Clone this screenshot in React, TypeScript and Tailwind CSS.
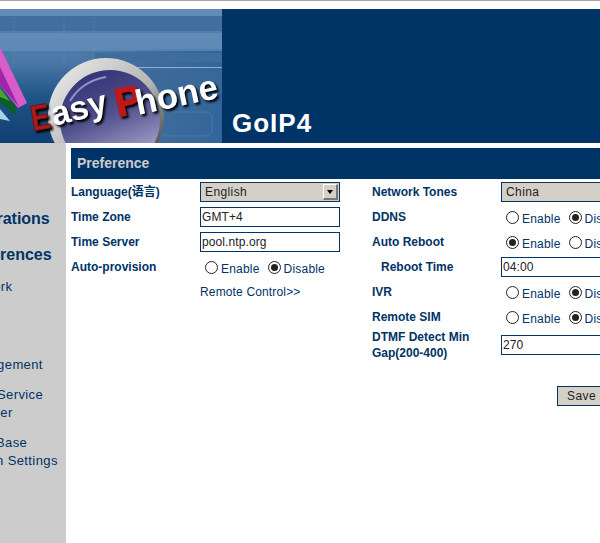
import React from 'react';

const font = { fontFamily: '"Liberation Sans", "Noto Sans CJK SC", sans-serif' };

const Logo = () => (
  <svg width="222" height="134" viewBox="0 0 222 134" className="block shrink-0">
    <defs>
      <linearGradient id="sky" x1="0" y1="0" x2="0" y2="1">
        <stop offset="0" stopColor="#5a84b1" />
        <stop offset="0.4" stopColor="#4a77a6" />
        <stop offset="0.65" stopColor="#1f5488" />
        <stop offset="1" stopColor="#0f3f72" />
      </linearGradient>
      <linearGradient id="skyRight" x1="0" y1="0" x2="1" y2="0">
        <stop offset="0" stopColor="#4a78a8" stopOpacity="0" />
        <stop offset="0.5" stopColor="#3f6d9d" stopOpacity="1" />
        <stop offset="1" stopColor="#33659a" stopOpacity="1" />
      </linearGradient>
      <linearGradient id="disc" x1="0" y1="0" x2="0.4" y2="1">
        <stop offset="0" stopColor="#2c2c72" />
        <stop offset="0.55" stopColor="#50508c" />
        <stop offset="1" stopColor="#a0a0c8" />
      </linearGradient>
      <linearGradient id="ring" x1="0" y1="0" x2="1" y2="1">
        <stop offset="0" stopColor="#f0f0f0" />
        <stop offset="0.55" stopColor="#b5b5b5" />
        <stop offset="1" stopColor="#222" />
      </linearGradient>
    </defs>
    <rect width="222" height="134" fill="url(#sky)" />
    <rect x="70" y="40" width="152" height="94" fill="url(#skyRight)" />
    <rect x="0" y="0" width="222" height="7" fill="#6a92bc" opacity="0.55" />
    <rect x="0" y="7" width="222" height="15" fill="#3d6998" opacity="0.8" />
    <rect x="0" y="24" width="222" height="18" fill="#6d95c0" opacity="0.55" />
    <rect x="95" y="44" width="127" height="9" fill="#3e6c9c" />
    <rect x="130" y="58" width="92" height="1" fill="#8aaed0" />
    <rect x="120" y="62" width="102" height="22" fill="#3a6898" opacity="0.7" />
    <rect x="160" y="103" width="52" height="24" rx="6" fill="none" stroke="#4a78a8" />
    <path d="M14 0 V60 M64 0 V60 M94 0 V45" stroke="#6f96bf" strokeDasharray="1 2" strokeWidth="1" opacity="0.7" />
    <path d="M0 38 L27 94 L18 99 L0 76 Z" fill="#d95ccb" />
    <path d="M0 58 L19 98 L0 76 Z" fill="#a024a8" />
    <path d="M0 79 L16 98 L16 106 L0 94 Z" fill="#0c5d2a" />
    <path d="M0 79 L10 92 L0 88 Z" fill="#4ea02f" />
    <path d="M0 100 L10 112 L0 110 Z" fill="#a6d3e6" />
    <circle cx="106" cy="107" r="58" fill="url(#ring)" />
    <circle cx="110" cy="111" r="50" fill="url(#disc)" />
    <path d="M70 92 Q82 72 106 68" fill="none" stroke="#a8a8d8" strokeWidth="2" opacity="0.8" />
    <g fontFamily='"Liberation Sans", sans-serif' fontWeight="700" className="drop-shadow-[2px_2px_1px_#000]">
      <text transform="translate(33 122) rotate(-10) scale(0.8 1)" fontSize="36" fill="#a81c1c" stroke="#7a1010" strokeWidth="1">E</text>
      <text transform="translate(54 117) rotate(-14)" fontSize="34" fill="#fff">asy</text>
      <text transform="translate(118 108) rotate(-12)" fontSize="40" fill="#c01818" stroke="#c01818" strokeWidth="1.2">P</text>
      <text transform="translate(138 106) rotate(-12)" fontSize="35" fill="#fff">hone</text>
    </g>
  </svg>
);

const Label = ({ children, className = '' }: { children: React.ReactNode; className?: string }) => (
  <div className={`font-bold text-[12px] leading-4 text-[#003366] ${className}`}>{children}</div>
);

const Radio = ({ on }: { on?: boolean }) => (
  <span className="w-[13px] h-[13px] rounded-full border border-[#222] bg-white flex items-center justify-center shrink-0">
    {on && <span className="w-[7px] h-[7px] rounded-full bg-[#222]" />}
  </span>
);

const RadioPair = ({ value }: { value: 'on' | 'off' }) => (
  <div className="flex items-center ml-[5px] text-[12px] tracking-[0.2px] text-[#003366]">
    <Radio on={value === 'on'} />
    <span className="ml-[3px] mt-[2px] mr-[8px]">Enable</span>
    <Radio on={value === 'off'} />
    <span className="ml-[3px] mt-[2px]">Disable</span>
  </div>
);

const Field = ({ value }: { value: string }) => (
  <div className="w-[140px] h-5 mb-px border border-[#003366] bg-white pl-[1px] text-[12px] leading-[18px] tracking-[0.1px] text-[#222]">{value}</div>
);

const Select = ({ value }: { value: string }) => (
  <div className="w-[140px] h-5 mb-px border border-[#003366] bg-[#d4d0c8] pl-1 flex items-center justify-between text-[12px] tracking-[0.4px] text-[#222]">
    <span>{value}</span>
    <span className="w-[15px] h-4 mr-[1px] bg-[#d4d0c8] border-t border-l border-white border-r-2 border-b-2 border-r-[#777] border-b-[#777] flex items-center justify-center">
      <span className="w-0 h-0 border-x-[3px] border-x-transparent border-t-[4px] border-t-black" />
    </span>
  </div>
);

const Row = ({ label, children, labelClass = '', rowClass = 'h-[25px]' }: { label: React.ReactNode; children: React.ReactNode; labelClass?: string; rowClass?: string }) => (
  <div className={`flex items-center ${rowClass}`}>
    <Label className={`w-[129px] shrink-0 ${labelClass}`}>{label}</Label>
    {children}
  </div>
);

export default function App() {
  return (
    <div className="w-[600px] h-[543px] overflow-hidden bg-white flex flex-col" style={font}>
      <div className="h-px bg-[#a8a4a0] shrink-0" />
      <div className="h-[134px] mt-2 bg-[#003366] flex shrink-0">
        <Logo />
        <div className="ml-[10px] mt-[99px] text-[26px] leading-[30px] font-bold tracking-[1px] text-white">GoIP4</div>
      </div>
      <div className="flex flex-1 min-h-0">
        <aside className="w-[66px] shrink-0 bg-[#cccccc] overflow-hidden text-[#003366] text-[13px] whitespace-nowrap">
          <div className="font-bold text-[16px] leading-5 mt-[66px] -ml-[64px]">Configurations</div>
          <div className="font-bold text-[16px] leading-5 mt-4 -ml-[40px]">Preferences</div>
          <div className="leading-4 mt-[14px] -ml-[38px] tracking-[0.4px]">Network</div>
          <div className="leading-4 mt-[62px] -ml-[37px] tracking-[0.4px]">Management</div>
          <div className="leading-[18px] mt-[13px] -ml-[3px] tracking-[0.4px]">Service</div>
          <div className="leading-[18px] -ml-[39px] tracking-[0.4px]">Provider</div>
          <div className="leading-[18px] mt-3 -ml-[4px] tracking-[0.4px]">Base</div>
          <div className="leading-[18px] -ml-[4px] tracking-[0.4px]">n Settings</div>
        </aside>
        <main className="flex-1 min-w-0 pl-[5px] pt-[5px] overflow-hidden">
          <div className="h-[31px] bg-[#003366] flex items-center pl-[6px] text-[14px] font-bold text-[#cccccc]">Preference</div>
          <div className="flex mt-px w-[700px]">
            <section className="w-[301px] shrink-0">
              <Row label={<>Language(语言)</>} labelClass="-mt-0.5"><Select value="English" /></Row>
              <Row label="Time Zone" labelClass="-mt-0.5"><Field value="GMT+4" /></Row>
              <Row label="Time Server" labelClass="-mt-0.5"><Field value="pool.ntp.org" /></Row>
              <Row label="Auto-provision" labelClass="-mt-0.5"><RadioPair value="off" /></Row>
              <Row label=""><span className="-mt-0.5 text-[12px] tracking-[0.15px] text-[#003366]">Remote Control&gt;&gt;</span></Row>
            </section>
            <section className="flex-1">
              <Row label="Network Tones" labelClass="-mt-0.5"><Select value="China" /></Row>
              <Row label="DDNS" labelClass="-mt-0.5"><RadioPair value="off" /></Row>
              <Row label="Auto Reboot" labelClass="-mt-0.5"><RadioPair value="on" /></Row>
              <Row label="Reboot Time" labelClass="-mt-0.5 pl-[9px]"><Field value="04:00" /></Row>
              <Row label="IVR" labelClass="-mt-0.5"><RadioPair value="off" /></Row>
              <Row label="Remote SIM" labelClass="-mt-0.5"><RadioPair value="off" /></Row>
              <Row label={<>DTMF Detect Min<br />Gap(200-400)</>} labelClass="-mt-0.5" rowClass="h-[31px]"><Field value="270" /></Row>
              <div className="mt-[25px] ml-[185px] w-[100px] h-5 border border-[#003366] bg-[#d4d0c8] pl-[9px] text-[12px] leading-[18px] tracking-[0.4px] text-[#222]">Save Changes</div>
            </section>
          </div>
        </main>
      </div>
    </div>
  );
}
